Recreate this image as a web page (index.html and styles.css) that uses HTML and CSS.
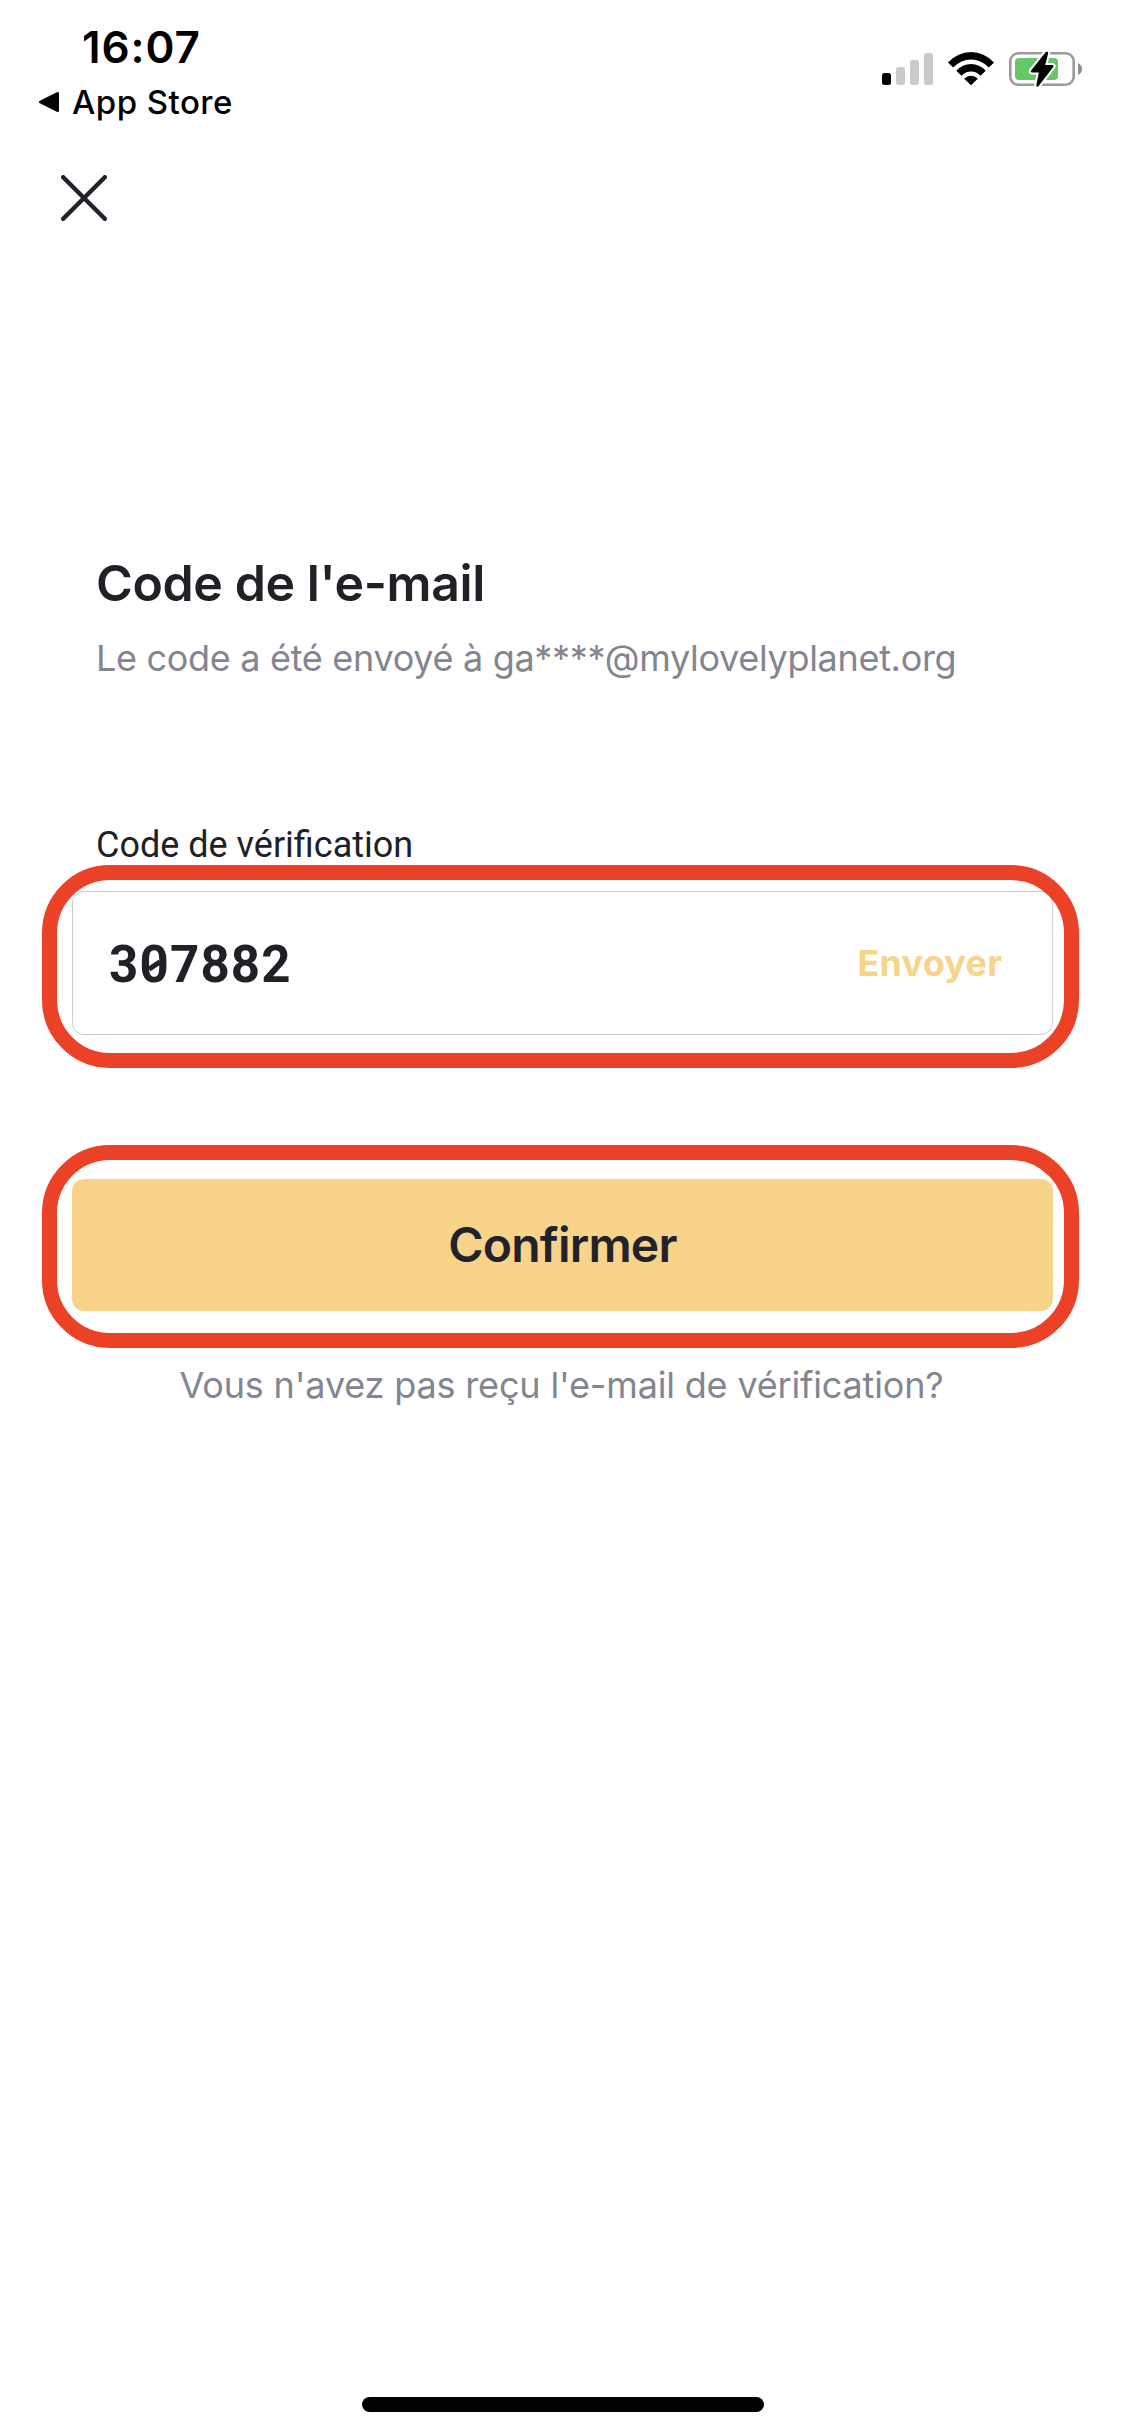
FILE: index.html
```html
<!DOCTYPE html>
<html lang="fr">
<head>
    <meta charset="UTF-8">
    <title>Code de l'e-mail</title>
    <link rel="stylesheet" href="styles.css">
</head>
<body>
<div class="screen">
    <header class="status-bar">
        <div class="status-left">
            <div class="time">16:07</div>
            <div class="back-app">
                <svg class="back-arrow" width="22" height="22" viewBox="0 0 22 22">
                    <path d="M2.5 11L19.500 2.500V19.500Z" stroke="#000" stroke-width="3" stroke-linejoin="round"/>
                </svg>
                <span>App Store</span>
            </div>
        </div>
        <div class="status-icons">
            <svg width="52" height="34" viewBox="0 0 52 34">
                <rect x="0" y="21" width="9" height="12" rx="2.500"/>
                <rect x="14" y="15" width="9" height="18" rx="2.500" fill="#cacaca"/>
                <rect x="28" y="8" width="9" height="25" rx="2.500" fill="#cacaca"/>
                <rect x="42" y="1" width="9" height="32" rx="2.500" fill="#cacaca"/>
            </svg>
            <svg class="wifi" width="46" height="34" viewBox="0 0 46 34">
                <path d="M0 10.500Q10 0 23 0T46 10.500L40.800 15.500Q33 7.500 23 7.500T5.200 15.500Z"/>
                <path d="M8.300 18.700Q14.500 12 23 12T37.700 18.700L32.500 23.800Q28.500 19.500 23 19.500T13.500 23.800Z"/>
                <path d="M16.200 26.800Q19 23.700 23 23.700T29.800 26.800L23 33.300Z"/>
            </svg>
            <svg class="battery" width="74" height="36" viewBox="0 0 74 36">
                <rect x="1.300" y="2.300" width="63.400" height="31.400" rx="8" fill="none" stroke="#9b9b9b" stroke-width="2.600"/>
                <rect x="6" y="7" width="43" height="22" rx="4" fill="#67c667"/>
                <path d="M69 12Q73 14 73 18T69 24Z" fill="#8e8e8e"/>
                <path d="M37.500 2L23 20.300H31.300L28.500 34.500L43.300 15.300H34.700L38 2Z" stroke="#fff" stroke-width="6.500" stroke-linejoin="round"/>
                <path d="M37.500 2L23 20.300H31.300L28.500 34.500L43.300 15.300H34.700L38 2Z" stroke="#000" stroke-width="2.400" stroke-linejoin="round"/>
            </svg>
        </div>
    </header>

    <svg class="close" width="46" height="46" viewBox="0 0 46 46">
        <path d="M2.200 2.200L43.800 43.800M43.800 2.200L2.200 43.800" stroke="#22222c" stroke-width="4.400" stroke-linecap="round"/>
    </svg>

    <main>
        <h1>Code de l'e-mail</h1>
        <p class="sent-to">Le code a été envoyé à ga****@mylovelyplanet.org</p>

        <div class="label">Code de vérification</div>
        <div class="highlight">
            <div class="code-field">
                <span class="code">3<span class="zero">0</span>7882</span>
                <span class="send">Envoyer</span>
            </div>
        </div>

        <div class="highlight confirm">
            <button>Confirmer</button>
        </div>
        <p class="resend">Vous n'avez pas reçu l'e-mail de vérification?</p>
    </main>

    <div class="home-bar"></div>
</div>
</body>
</html>
```
FILE: styles.css
```css
html,body{
    margin:0;
    background:#fff;
}
.screen{
    display:flex;
    flex-direction:column;
    box-sizing:border-box;
    width:1125px;
    height:2436px;
    padding:20px 0 24px;
    font-family:Inter,"Liberation Sans",sans-serif;
    color:#202126;
}
.status-bar{
    display:flex;
    justify-content:space-between;
    height:102px;
    padding:0 42px 0 38px;
    color:#000;
}
.time{
    margin-left:44px;
    font-size:44px;
    font-weight:600;
    line-height:54px;
    letter-spacing:0.900px;
}
.back-app{
    display:flex;
    align-items:center;
    margin-top:8px;
    font-size:33px;
    font-weight:500;
    line-height:40px;
    letter-spacing:0.450px;
}
.back-arrow{
    margin-right:12px;
}
.status-icons{
    display:flex;
    align-items:flex-start;
    padding-top:32px;
}
.wifi{
    margin-left:14px;
}
.battery{
    margin:-1px 0 0 15px;
    overflow:visible;
}
.close{
    margin:53px 0 0 61px;
}
main{
    padding:332px 72px 0;
}
h1{
    margin:0 0 23px 24px;
    font-size:50px;
    font-weight:600;
    line-height:60px;
    letter-spacing:-0.400px;
}
.sent-to{
    margin:0 0 143px 24px;
    font-size:36px;
    line-height:44px;
    letter-spacing:-0.310px;
    color:#838591;
    white-space:nowrap;
}
.label{
    margin:0 0 24px 24px;
    font-family:Roboto,sans-serif;
    font-size:36px;
    line-height:44px;
}
.highlight{
    position:relative;
}
/* red ring around the step */
.highlight::before{
    content:"";
    position:absolute;
    top:-26.500px;
    left:-30.500px;
    box-sizing:border-box;
    width:1037px;
    height:203px;
    border:15px solid #ea4127;
    border-radius:68px;
}
.code-field{
    display:flex;
    align-items:center;
    justify-content:space-between;
    box-sizing:border-box;
    height:144px;
    padding:0 50px 0 36px;
    border:1px solid #ccc;
    border-radius:12px;
}
.code{
    padding-top:2px;
    font-family:Roboto,sans-serif;
    font-size:51px;
    font-weight:700;
    letter-spacing:1.200px;
}
.zero{
    position:relative;
}
.zero::after{
    content:"";
    position:absolute;
    left:9px;
    top:28px;
    width:13px;
    height:5px;
    background:#202126;
    transform:rotate(-33deg);
}
.send{
    font-size:36px;
    font-weight:700;
    letter-spacing:0.200px;
    color:#f8d48a;
}
.confirm{
    margin-top:144px;
}
.confirm::before{
    top:-34.500px;
}
button{
    display:block;
    width:100%;
    height:132px;
    padding:0 0 2px;
    border:0;
    border-radius:12px;
    background:#f8d48a;
    font-family:inherit;
    font-size:48px;
    font-weight:600;
    letter-spacing:-0.800px;
    color:#22222c;
}
.resend{
    margin:52px 2px 0 0;
    font-size:36px;
    line-height:44px;
    letter-spacing:-0.165px;
    text-align:center;
    color:#838591;
}
.home-bar{
    width:402px;
    height:15px;
    margin:auto auto 0;
    border-radius:8px;
    background:#000;
}
```
